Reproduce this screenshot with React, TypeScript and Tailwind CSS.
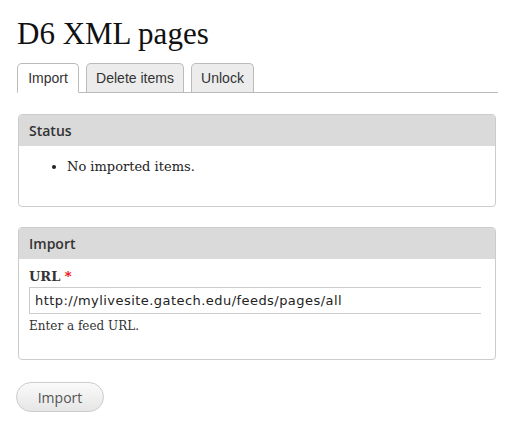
export default function App() {
  const tabs = [
    { label: 'Import', w: 'w-[62px]', active: true },
    { label: 'Delete items', w: 'w-[98px]', active: false },
    { label: 'Unlock', w: 'w-[63px]', active: false },
  ];

  return (
    <div className="w-[505px] h-[423px] bg-white overflow-hidden">
      <div className="pl-[17px] pr-[7px]">
        <h1 className="pt-[16px] h-[63px] text-[31px] leading-[36px] text-[#111] font-['Liberation_Serif',serif]">
          D6 XML pages
        </h1>

        {/* Tabs */}
        <div className="flex gap-[7px] h-[30px] border-b border-[#bbb] items-end">
          {tabs.map(t => (
            <div
              key={t.label}
              className={`${t.w} flex items-center justify-center rounded-t-[5px] border border-[#bbb] text-[14px] text-[#333] font-['Liberation_Sans',sans-serif] ${t.active ? 'bg-white border-b-white -mb-px h-[30px]' : 'bg-[#ececec] border-b-0 h-[29px]'}`}
            >
              {t.label}
            </div>
          ))}
        </div>

        {/* Status */}
        <div className="mt-[21px] ml-px w-[478px] h-[93px] border border-[#ccc] rounded-[4px] overflow-hidden">
          <div className="h-[31px] bg-[#dadada] pl-[10px] flex items-center text-[14px] font-semibold text-[#333] font-['Open_Sans',sans-serif]">
            Status
          </div>
          <ul className="pl-[48px] pt-[11px] list-disc text-[13px] text-[#222] font-['DejaVu_Serif',serif]">
            <li>No imported items.</li>
          </ul>
        </div>

        {/* Import */}
        <div className="mt-[20px] ml-px w-[478px] h-[133px] border border-[#ccc] rounded-[4px] overflow-hidden">
          <div className="h-[31px] bg-[#dadada] pl-[10px] flex items-center text-[14px] font-semibold text-[#333] font-['Open_Sans',sans-serif]">
            Import
          </div>
          <div className="pl-[10px] pt-[8px]">
            <div className="text-[13px] font-bold text-[#333] font-['DejaVu_Serif',serif] leading-[20px]">
              URL <span className="text-[#e00]">*</span>
            </div>
            <div className="w-[452px] h-[27px] border border-[#ccc] border-r-0 flex items-center pl-[5px] text-[13px] tracking-[0.45px] text-[#222] font-['DejaVu_Sans',sans-serif]">
              http://mylivesite.gatech.edu/feeds/pages/all
            </div>
            <div className="mt-[2px] text-[12px] text-[#333] font-['DejaVu_Serif',serif] leading-[20px]">
              Enter a feed URL.
            </div>
          </div>
        </div>

        {/* Button */}
        <button className="mt-[22px] -ml-px w-[88px] h-[30px] rounded-full border border-[#ccc] bg-gradient-to-b from-[#fafafa] to-[#e6e6e6] text-[14px] text-[#555] font-['Open_Sans',sans-serif]">
          Import
        </button>
      </div>
    </div>
  );
}
